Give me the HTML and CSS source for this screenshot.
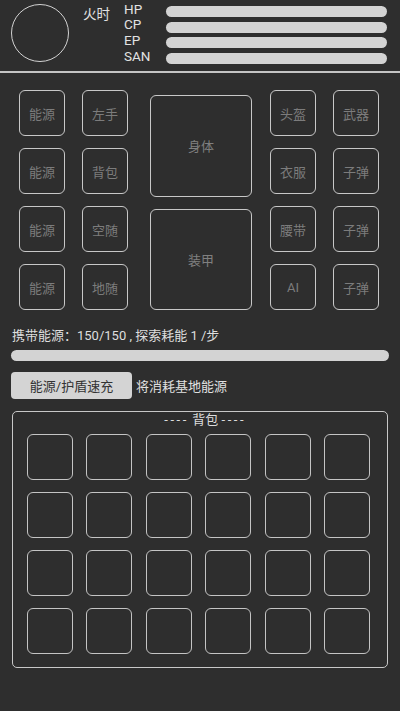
FILE: index.html
```html
<!DOCTYPE html>
<html lang="zh">
<head>
<meta charset="utf-8">
<title>装备</title>
<link rel="stylesheet" href="styles.css">
</head>
<body>
<div class="page">
  <header class="header">
    <div class="avatar"></div>
    <div class="name">火时</div>
    <div class="stats">
      <div class="stat"><span class="stat-label">HP</span><span class="stat-bar"></span></div>
      <div class="stat"><span class="stat-label">CP</span><span class="stat-bar"></span></div>
      <div class="stat"><span class="stat-label">EP</span><span class="stat-bar"></span></div>
      <div class="stat"><span class="stat-label">SAN</span><span class="stat-bar"></span></div>
    </div>
  </header>

  <section class="equip">
    <div class="col">
      <div class="slot">能源</div>
      <div class="slot">能源</div>
      <div class="slot">能源</div>
      <div class="slot">能源</div>
    </div>
    <div class="col col-2">
      <div class="slot">左手</div>
      <div class="slot">背包</div>
      <div class="slot">空随</div>
      <div class="slot">地随</div>
    </div>
    <div class="col col-center">
      <div class="slot big">身体</div>
      <div class="slot big">装甲</div>
    </div>
    <div class="col col-3">
      <div class="slot">头盔</div>
      <div class="slot">衣服</div>
      <div class="slot">腰带</div>
      <div class="slot">AI</div>
    </div>
    <div class="col col-4">
      <div class="slot">武器</div>
      <div class="slot">子弹</div>
      <div class="slot">子弹</div>
      <div class="slot">子弹</div>
    </div>
  </section>

  <div class="energy-text">携带能源：150/150 , 探索耗能 1 /步</div>
  <div class="energy-bar"></div>

  <div class="action-row">
    <button class="action-btn">能源/护盾速充</button>
    <span class="action-note">将消耗基地能源</span>
  </div>

  <section class="bag">
    <div class="bag-title"><span class="dashes">----</span> 背包 <span class="dashes">----</span></div>
    <div class="bag-grid">
      <div class="cell"></div><div class="cell"></div><div class="cell"></div><div class="cell"></div><div class="cell"></div><div class="cell"></div>
      <div class="cell"></div><div class="cell"></div><div class="cell"></div><div class="cell"></div><div class="cell"></div><div class="cell"></div>
      <div class="cell"></div><div class="cell"></div><div class="cell"></div><div class="cell"></div><div class="cell"></div><div class="cell"></div>
      <div class="cell"></div><div class="cell"></div><div class="cell"></div><div class="cell"></div><div class="cell"></div><div class="cell"></div>
    </div>
  </section>
</div>
</body>
</html>
```

FILE: styles.css
```css
* {
  box-sizing: border-box;
}

html, body {
  margin: 0;
  padding: 0;
  background: #2e2e2e;
}

body {
  font-family: "Roboto", "Noto Sans CJK SC", sans-serif;
  font-size: 13px;
  color: #dcdcdc;
}

.page {
  width: 400px;
  min-height: 711px;
  background: #2e2e2e;
}

/* Header */
.header {
  display: flex;
  align-items: flex-start;
  height: 73px;
  border-bottom: 2px solid #c4c4c4;
}

.avatar {
  width: 58px;
  height: 58px;
  margin: 4px 0 0 11px;
  border: 1.5px solid #d2d2d2;
  border-radius: 50%;
}

.name {
  width: 41px;
  margin: 6px 0 0 14px;
  font-size: 13.5px;
  line-height: 16px;
  color: #e2e2e2;
}

.stats {
  padding-top: 1.8px;
  display: flex;
  flex-direction: column;
}

.stat {
  display: flex;
  align-items: flex-start;
  height: 15.7px;
}

.stat-label {
  width: 42px;
  font-size: 13.5px;
  line-height: 15.7px;
  color: #e2e2e2;
}

.stat-bar {
  display: block;
  width: 221px;
  height: 11px;
  margin-top: 4.2px;
  background: #d3d3d3;
  border-radius: 6px;
}

/* Equipment */
.equip {
  display: flex;
  align-items: flex-start;
  padding: 17px 0 0 19px;
}

.col {
  display: flex;
  flex-direction: column;
  gap: 12px;
}

.col-2 { margin-left: 17px; }
.col-center { margin-left: 22px; margin-top: 5px; gap: 12px; }
.col-3 { margin-left: 18px; }
.col-4 { margin-left: 17px; }

.slot {
  width: 46px;
  height: 46px;
  border: 1.5px solid #c8c8c8;
  border-radius: 6px;
  display: flex;
  align-items: center;
  justify-content: center;
  color: #7c7c7c;
  font-size: 13px;
}

.slot.big {
  width: 102px;
  height: 101.5px;
  color: #808080;
}

/* Energy */
.energy-text {
  margin: 16px 0 0 12px;
  line-height: 20px;
  color: #dedede;
}

.energy-bar {
  margin: 4px 11px 0 11px;
  height: 11px;
  background: #d3d3d3;
  border-radius: 6px;
}

.action-row {
  display: flex;
  align-items: center;
  margin: 11px 0 0 11px;
}

.action-btn {
  width: 121px;
  height: 27px;
  border: none;
  border-radius: 4px;
  background: #d4d4d4;
  color: #333333;
  font-family: inherit;
  font-size: 13px;
  padding: 0;
}

.action-note {
  margin-left: 4px;
  color: #e0e0e0;
}

/* Bag */
.bag {
  margin: 12px 12px 0 12px;
  border: 1.5px solid #c8c8c8;
  border-radius: 5px;
  padding: 0 0 13.5px 13.5px;
}

.bag-title {
  text-align: center;
  line-height: 16px;
  color: #dcdcdc;
  padding-right: 3px;
}

.dashes {
  letter-spacing: 2.6px;
}

.bag-grid {
  margin-top: 5.5px;
  display: grid;
  grid-template-columns: repeat(6, 46px);
  column-gap: 13.6px;
  row-gap: 12px;
}

.cell {
  height: 46px;
  border: 1.5px solid #c4c4c4;
  border-radius: 6px;
}
```
